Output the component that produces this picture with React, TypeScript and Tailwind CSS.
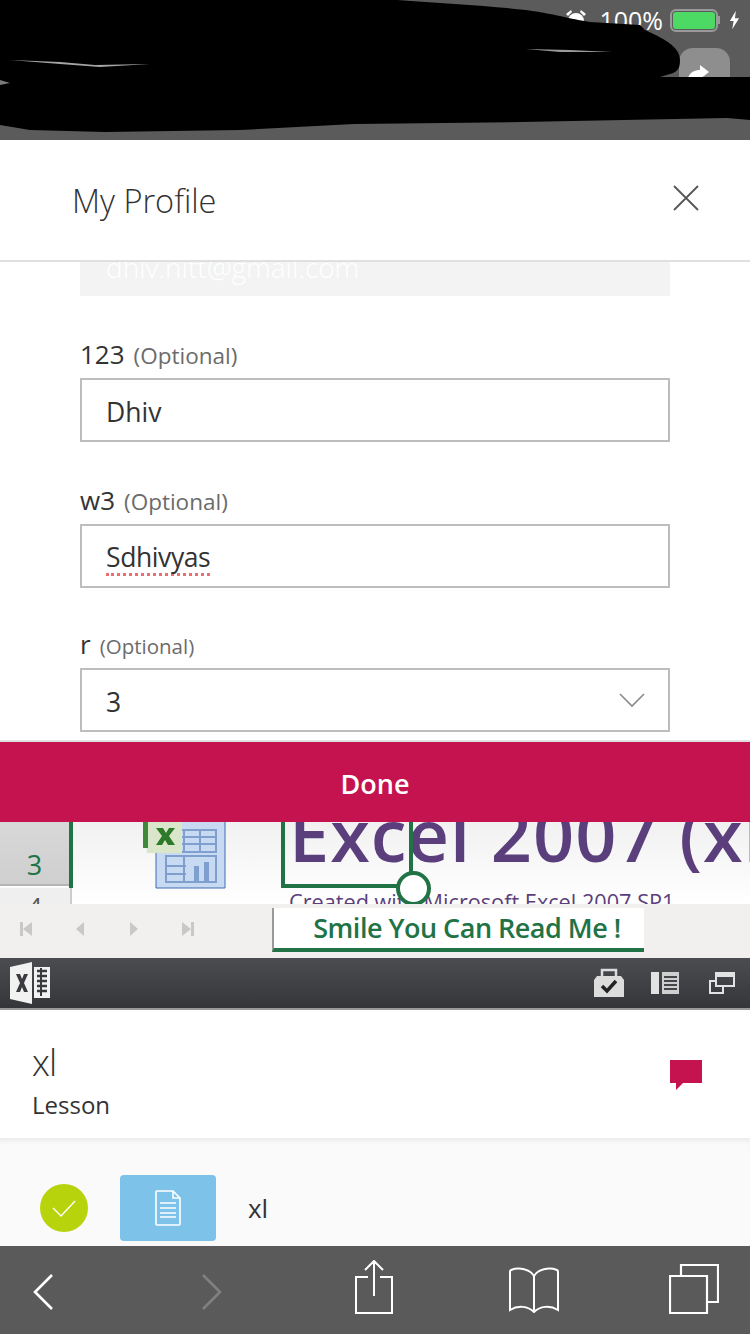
const sans = "font-['Open_Sans','Liberation_Sans',sans-serif]";

const Field = ({ label, note, value, spell, select, top }: { label: string; note: string; value: string; spell?: boolean; select?: boolean; top: string }) => (
  <div className={`${top} mx-[80px] w-[590px]`}>
    <div className="-mt-[1px] flex h-[34px] items-baseline">
      <span className="text-[26px] leading-[34px] text-[#333]">{label}</span>
      <span className={`${note} ml-[9px] leading-[34px] text-[#6b6b6b]`}>(Optional)</span>
    </div>
    <div className="mt-[7px] flex h-[64px] items-center justify-between border-2 border-[#bdbdbd] bg-white pl-[24px] pr-[23px] text-[26.500px] text-[#333]">
      <span className={spell ? "mt-[4px] border-b-[3px] border-dotted border-[#ea6f6f] leading-[32px] tracking-[-0.4px]" : "mt-[4px] leading-[32px]"}>{value}</span>
      {select && (
        <svg width="26" height="16" viewBox="0 0 26 16" fill="none" stroke="#8a8a8a" strokeWidth="1.6">
          <path d="M1 2l12 12L25 2" />
        </svg>
      )}
    </div>
  </div>
);

const ExcelLogo = () => (
  <svg width="44" height="44" viewBox="0 0 44 44">
    <path d="M2 6L24 1v42L2 38z" fill="#f2f2f2" />
    <path d="M26 6h16v31H26z" fill="#f2f2f2" />
    <path d="M29 10h10M29 15h10M29 20h10M29 25h10M29 30h10" stroke="#3a3b3f" strokeWidth="2.5" />
    <path d="M33 7v28" stroke="#3a3b3f" strokeWidth="2" />
    <path d="M8 13h4l2 5 2-5h4l-4 9 4 9h-4l-2-5-2 5H8l4-9z" fill="#3a3b3f" />
  </svg>
);

const App = () => {
  return (
    <div className={`${sans} flex h-[1334px] w-[750px] flex-col overflow-hidden bg-white`}>
      {/* browser top, hidden by a scribble */}
      <div className="relative flex h-[140px] shrink-0 justify-end overflow-hidden bg-[#5b5b5b]">
        <div className="mr-[10px] mt-[4px] flex h-[32px] items-center">
          <svg width="22" height="22" viewBox="0 0 22 22" fill="#fff" className="mr-[12px]">
            <circle cx="11" cy="12" r="8" />
            <path d="M1 5l5-4 1 2-4 4zM21 5l-5-4-1 2 4 4z" />
          </svg>
          <span className="mr-[7px] text-[25px] leading-[32px] text-white">100%</span>
          <div className="flex items-center">
            <div className="h-[23px] w-[48px] rounded-[6px] border-[2.500px] border-[#9a9a9a] p-[1px]">
              <div className="h-full w-full rounded-[3px] bg-[#4cd964]" />
            </div>
            <div className="h-[8px] w-[2px] bg-[#9a9a9a]" />
          </div>
          <svg width="11" height="20" viewBox="0 0 12 20" fill="#fff" className="ml-[9px]">
            <path d="M7.500 0L1 11h4l-1.500 9L11 8H6.500z" />
          </svg>
        </div>
        <div className="absolute left-[679px] top-[48px] h-[50px] w-[51px] rounded-[14px] bg-[#8e8e8e]" />
        <svg className="absolute left-0 top-0" width="750" height="140" viewBox="0 0 750 140">
          <path d="M688 78C690 72 695 70 700 70V65L709 72L700 79Z" fill="#fff" />
          <path
            d="M0 0H397C440 3 490 6 526 10C560 15 575 20 590 22L640 25L645 30C662 38 680 46 680 60C680 68 678 72 670 74L660 77H750V120L727 118L521 122L354 124L240 130L105 132L30 130L0 125Z"
            fill="#000"
          />
          <path d="M10 60L60 62L95 65L150 64L100 67L60 64Z" fill="#a5a5a5" />
          <path d="M526 49L570 50L612 52L560 52Z" fill="#9a9a9a" />
          <path d="M0 80L10 83L0 85Z" fill="#7a7a7a" />
        </svg>
      </div>

      {/* profile dialog */}
      <div className="flex h-[120px] shrink-0 items-center justify-between pl-[72px] pr-[50px]">
        <span className="pt-[2px] text-[32.500px] font-light text-[#333]">My Profile</span>
        <svg width="28" height="28" viewBox="0 0 28 28" stroke="#555" strokeWidth="1.8" className="mb-[4px]">
          <path d="M2 2l24 24M26 2L2 26" />
        </svg>
      </div>
      <div className="h-[482px] shrink-0 overflow-hidden border-y-2 border-[#e0e0e0]">
        <div className="mx-[80px] h-[34px] w-[590px] overflow-hidden bg-[#f3f3f3]">
          <div className="-mt-[13px] pl-[26px] text-[28px] font-light leading-[36px] text-white">dhiv.nitt@gmail.com</div>
        </div>
        <Field top="mt-[42px]" label="123" note="text-[22.500px]" value="Dhiv" />
        <Field top="mt-[42px]" label="w3" note="text-[22.500px]" value="Sdhivyas" spell />
        <Field top="mt-[40px]" label="r" note="text-[20.500px]" value="3" select />
      </div>
      <div className="flex h-[80px] shrink-0 items-center justify-center bg-[#c4134f] pt-[5px] text-[27px] font-semibold text-white">Done</div>

      {/* excel preview */}
      <div className="relative h-[82px] shrink-0 overflow-hidden bg-gradient-to-b from-[#f1f1f1] to-white">
        <div className="absolute left-0 top-0 h-[64px] w-[69px] border-b-2 border-[#b5b5b5] bg-gradient-to-b from-[#d8d8d8] to-[#cfcfcf] text-center">
          <span className="block pt-[25px] text-[27px] leading-[36px] text-[#217346]">3</span>
        </div>
        <div className="absolute left-0 top-[66px] w-[72px] border-r-2 border-[#ccc] bg-[#efefef] text-center text-[24px] leading-[36px] text-[#555]">4</div>
        <div className="absolute left-[69px] top-0 h-[66px] w-[4px] bg-[#217346]" />
        <svg className="absolute left-[142px] top-0" width="86" height="68" viewBox="0 0 86 68">
          <path d="M14 -6H83V66H14z" fill="#c8d9f2" stroke="#3f6db0" strokeWidth="1" />
          <path d="M24 8h50v22H24zM24 34h50v26H24z" fill="none" stroke="#7f9fcf" strokeWidth="2" />
          <path d="M24 15h50M24 22h50M42 8v22M58 8v22M24 44h20M24 52h20M42 34v26" stroke="#7f9fcf" strokeWidth="2" />
          <path d="M52 60V44h5v16zM62 60V40h5v20z" fill="#7f9fcf" />
          <path d="M1 -6H40V31H5z" fill="#d9e6c9" />
          <path d="M1 -6V26H6V-6z" fill="#3f8a3a" />
          <path d="M14 6h7l3 5 3-5h6l-6 8 6 9h-7l-3-5-3 5h-6l6-9z" fill="#2c7a2a" />
        </svg>
        <div className="absolute left-[289px] top-[-33px] whitespace-nowrap text-[72px] font-semibold leading-[90px] tracking-[1px] text-[#5b3f7c]">Excel 2007 (xl</div>
        <div className="absolute left-[289px] top-[65px] whitespace-nowrap text-[21.700px] leading-[30px] text-[#5b3f7c]">Created with Microsoft Excel 2007 SP1</div>
        <div className="absolute left-[281px] top-0 h-[66px] w-[132px] border-b-[4px] border-l-[4px] border-r-[4px] border-[#217346]" />
        <div className="absolute left-[396px] top-[49px] h-[35px] w-[35px] rounded-full border-[4px] border-[#217346] bg-white" />
      </div>
      <div className="flex h-[54px] shrink-0 items-start bg-[#f1f0ee] pt-[4px]">
        <svg width="272" height="46" viewBox="0 0 272 46" fill="#c8c8c8">
          <path d="M20 14h3v14h-3zM32 14v14l-9-7zM84 14v14l-8-7zM130 14v14l8-7zM182 14v14l9-7zM191 14h3v14h-3z" />
        </svg>
        <div className="flex h-[44px] w-[372px] items-center justify-center border-b-[4px] border-l-2 border-[#217346] border-l-[#9a9a9a] bg-white pl-[16px] text-[27px] font-semibold text-[#217346]">
          <span className="tracking-[-0.5px]">Smile You Can Read Me !</span>
        </div>
      </div>
      <div className="flex h-[52px] shrink-0 items-center justify-between border-b-2 border-[#9a9a9a] bg-gradient-to-b from-[#4c4d51] to-[#35363a] pl-[8px] pr-[15px]">
        <ExcelLogo />
        <div className="flex items-center">
          <svg width="30" height="30" viewBox="0 0 30 30">
            <path d="M3 8h24l3 4v17H0V12z" fill="#dcdcdc" />
            <path d="M8 8V2h14v6" fill="none" stroke="#dcdcdc" strokeWidth="2.500" />
            <path d="M8 18l5 5 9-10" fill="none" stroke="#222" strokeWidth="3.500" />
          </svg>
          <svg width="30" height="22" viewBox="0 0 30 22" className="ml-[26px]">
            <path d="M1 0h8v22H1z" fill="#e2e2e2" />
            <path d="M12 0h17v22H12z" fill="#cfcfcf" />
            <path d="M14 5h13M14 9h13M14 13h13M14 17h13" stroke="#45464a" strokeWidth="2" />
          </svg>
          <svg width="26" height="24" viewBox="0 0 26 24" fill="none" stroke="#e2e2e2" strokeWidth="2" className="ml-[29px]">
            <path d="M7 2h18v13H7z" />
            <path d="M7 4.500h18" strokeWidth="3" />
            <path d="M7 10H1v12h13v-6" />
          </svg>
        </div>
      </div>

      {/* lesson header */}
      <div className="flex h-[128px] shrink-0 items-start justify-between pl-[32px] pr-[48px] pt-[29px]">
        <div>
          <div className="text-[36px] font-light leading-[48px] tracking-[-1px] text-[#333]">xl</div>
          <div className="text-[24px] leading-[36px] text-[#333]">Lesson</div>
        </div>
        <svg width="32" height="30" viewBox="0 0 32 30" fill="#c4134f" className="mt-[21px]">
          <path d="M0 0h32v23H13l-7 7v-7H0z" />
        </svg>
      </div>
      <div className="flex h-[108px] shrink-0 items-center bg-[#fafafa] pl-[40px] pt-[32px] shadow-[inset_0_6px_6px_-4px_rgba(0,0,0,0.08)]">
        <div className="flex h-[48px] w-[48px] items-center justify-center rounded-full bg-[#b6d30c]">
          <svg width="26" height="20" viewBox="0 0 26 20" fill="none" stroke="#fff" strokeWidth="1.400">
            <path d="M2 10l8 8L24 3" />
          </svg>
        </div>
        <div className="ml-[32px] flex h-[66px] w-[96px] items-center justify-center rounded-[4px] bg-[#7dc3e9]">
          <svg width="26" height="36" viewBox="0 0 26 36" fill="none" stroke="#fff" strokeWidth="1.600">
            <path d="M2 1h16l7 7v26a1 1 0 0 1-1 1H2a1 1 0 0 1-1-1V2a1 1 0 0 1 1-1z" />
            <path d="M18 1v7h7M5 13h16M5 18h16M5 23h16M5 27h16" />
          </svg>
        </div>
        <span className="ml-[32px] text-[26px] leading-[36px] text-[#333]">xl</span>
      </div>

      {/* safari toolbar */}
      <div className="flex h-[88px] shrink-0 items-center bg-[#5a5a5a] pl-[32px] pr-[31px]">
        <svg width="22" height="38" viewBox="0 0 22 38" fill="none" stroke="#fff" strokeWidth="2.600" className="mt-[4px]">
          <path d="M20 2L3 19l17 17" />
        </svg>
        <svg width="22" height="38" viewBox="0 0 22 38" fill="none" stroke="#808080" strokeWidth="2.600" className="ml-[147px] mt-[4px]">
          <path d="M2 2l17 17L2 36" />
        </svg>
        <svg width="38" height="54" viewBox="0 0 38 54" fill="none" stroke="#fff" strokeWidth="2" className="mb-[6px] ml-[132px]">
          <path d="M19 36V2M10 10l9-9 9 9M13 17H1v36h36V17H25" />
        </svg>
        <svg width="50" height="46" viewBox="0 0 50 46" fill="none" stroke="#fff" strokeWidth="2" className="ml-[116px]">
          <path d="M25 9C21 2 10 0 2 3c-1 .4-1 1-1 2v38c8-5 18-4 24 2 6-6 16-7 24-2V5c0-1 0-1.600-1-2-8-3-19-1-23 6zM25 9v36" />
        </svg>
        <svg width="50" height="50" viewBox="0 0 50 50" fill="none" stroke="#fff" strokeWidth="2.200" className="mb-[3px] ml-auto">
          <path d="M12 12V1h37v37H39" />
          <path d="M1 12h37v37H1z" />
        </svg>
      </div>
    </div>
  );
};

export default App;
